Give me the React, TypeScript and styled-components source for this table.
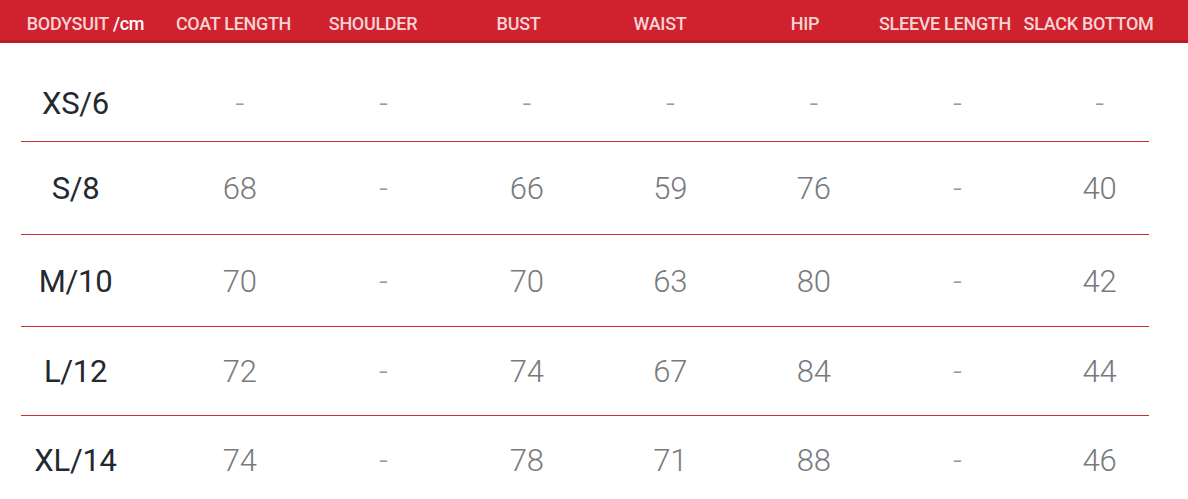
import React from 'react'
import styled, { createGlobalStyle } from "styled-components";

const GlobalStyle = createGlobalStyle`
  html, body {
    margin: 0;
    padding: 0;
    background: #fff;
  }
  body {
    font-family: Roboto, "Liberation Sans", sans-serif;
  }
`;

const headers = [
  "COAT LENGTH",
  "SHOULDER",
  "BUST",
  "WAIST",
  "HIP",
  "SLEEVE LENGTH",
  "SLACK BOTTOM",
];

const rows: { size: string; height: number; values: string[] }[] = [
  { size: "XS/6", height: 99, values: ["-", "-", "-", "-", "-", "-", "-"] },
  { size: "S/8", height: 93, values: ["68", "-", "66", "59", "76", "-", "40"] },
  { size: "M/10", height: 92, values: ["70", "-", "70", "63", "80", "-", "42"] },
  { size: "L/12", height: 89, values: ["72", "-", "74", "67", "84", "-", "44"] },
  { size: "XL/14", height: 88, values: ["74", "-", "78", "71", "88", "-", "46"] },
];

const SizeChart = () => {
  return (
    <Wrapper>
      <HeaderBar>
        <HeaderCell>
          BODYSUIT&nbsp;<Unit>/cm</Unit>
        </HeaderCell>
        {headers.map((h) => (
          <HeaderCell key={h}>{h}</HeaderCell>
        ))}
      </HeaderBar>
      <Body>
        {rows.map((row, i) => (
          <Row
            key={row.size}
            $height={row.height}
            $first={i === 0}
            $last={i === rows.length - 1}
          >
            <SizeLabel>{row.size}</SizeLabel>
            {row.values.map((v, j) => (
              <Value key={j} $dash={v === "-"} $end={j === row.values.length - 1}>
                {v}
              </Value>
            ))}
          </Row>
        ))}
      </Body>
    </Wrapper>
  )
}

export default function App() {
  return (
    <>
      <GlobalStyle />
      <SizeChart />
    </>
  )
}

const Wrapper = styled.div`
  width: 1188px;
  height: 499px;
  overflow: hidden;
  background: #fff;
`;

const HeaderBar = styled.div`
  display: grid;
  grid-template-columns: 171px 125px 154px 137px 146px 144px 136px 151px 1fr;
  align-items: center;
  height: 40px;
  background: #d0222e;
  border-bottom: 3px solid #b71c27;
`;

const HeaderCell = styled.div`
  display: flex;
  justify-content: center;
  white-space: nowrap;
  font-family: Roboto, "Liberation Sans", sans-serif;
  font-size: 18px;
  font-weight: 500;
  letter-spacing: -0.3px;
  color: #f6d4d4;
  padding-top: 6px;
`;

const Unit = styled.span`
  color: #ffffff;
`;

const Body = styled.div`
  margin-left: 21px;
  width: 1128px;
`;

const Row = styled.div<{ $height: number; $first?: boolean; $last?: boolean }>`
  display: grid;
  grid-template-columns: 147px repeat(6, 143.5px) 1fr;
  align-items: center;
  box-sizing: border-box;
  height: ${(p) => p.$height}px;
  padding-top: ${(p) => (p.$first ? "22px" : "1px")};
  border-bottom: ${(p) => (p.$last ? "none" : "1px solid #d42c34")};
`;

const SizeLabel = styled.div`
  padding-right: 38px;
  text-align: center;
  font-family: Roboto, "Liberation Sans", sans-serif;
  font-size: 31px;
  font-weight: 400;
  letter-spacing: -0.3px;
  color: #242931;
`;

const Value = styled.div<{ $dash?: boolean; $end?: boolean }>`
  text-align: center;
  padding-left: ${(p) => (p.$end ? "21px" : "0")};
  font-family: Roboto, "Liberation Sans", sans-serif;
  font-size: 31px;
  font-weight: 300;
  letter-spacing: -0.3px;
  color: ${(p) => (p.$dash ? "#9a9a9a" : "#777a7d")};
`;
